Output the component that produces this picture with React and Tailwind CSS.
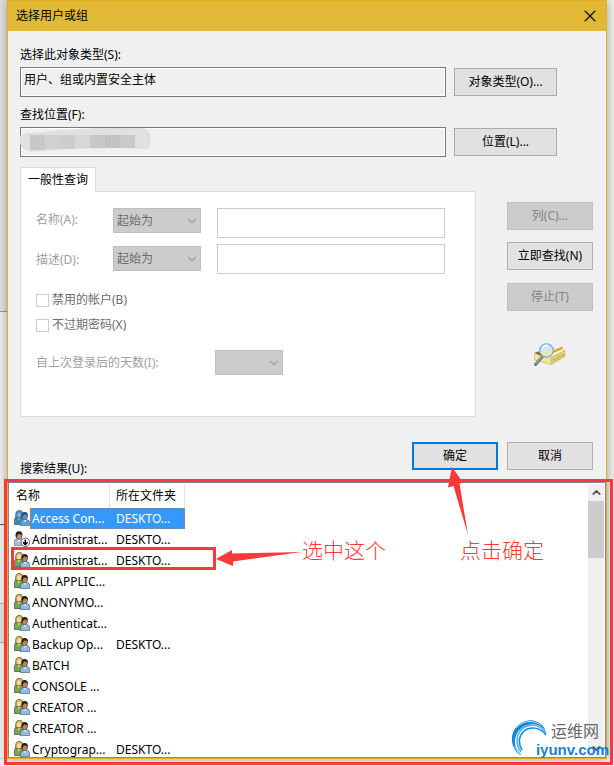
import { X, ChevronDown, ChevronUp } from "lucide-react";

const results = [
  { name: "Access Con...", folder: "DESKTO...", icon: "group", selected: true },
  { name: "Administrat...", folder: "DESKTO...", icon: "user" },
  { name: "Administrat...", folder: "DESKTO...", icon: "group" },
  { name: "ALL APPLIC...", folder: "", icon: "group" },
  { name: "ANONYMO...", folder: "", icon: "group" },
  { name: "Authenticat...", folder: "", icon: "group" },
  { name: "Backup Op...", folder: "DESKTO...", icon: "group" },
  { name: "BATCH", folder: "", icon: "group" },
  { name: "CONSOLE ...", folder: "", icon: "group" },
  { name: "CREATOR ...", folder: "", icon: "group" },
  { name: "CREATOR ...", folder: "", icon: "group" },
  { name: "Cryptograp...", folder: "DESKTO...", icon: "group" },
];

const GroupIcon = ({ selected }) => {
  const c = selected
    ? { hair: "#4d86b8", face: "#7fb2dc", body: "#3f8a9c", hair2: "#1d4f80", face2: "#5d94c4", body2: "#5fa4e0", line: "#24547f" }
    : { hair: "#d9b452", face: "#f4dcae", body: "#7aa84c", hair2: "#2b211b", face2: "#b98661", body2: "#8fbbe8", line: "#2c3226" };

  return (
    <svg width="16" height="16" viewBox="0 0 16 16" className="-mt-0.5 shrink-0" aria-hidden="true">
      <path d="M.4 14.500V9.500Q.4 7.200 3 6.700h4Q9 7 9 9v5.500z" fill={c.body} stroke={c.line} strokeWidth=".6" />
      <path d="M3.200 7l1.400 3.500L6.500 7z" fill={c.face} />
      <path d="M1.800 7.200Q.8.500 5 .4t4 4.300L8 7.500 2.500 7.800z" fill={c.hair} stroke={c.line} strokeWidth=".6" />
      <ellipse cx="5" cy="4.800" rx="1.900" ry="2.500" fill={c.face} />
      <path d="M6.300 15.700V12.500q0-2.500 3-3h3.400q3 .5 3 3v3.200z" fill={c.body2} stroke={c.line} strokeWidth=".5" />
      <path d="M9.500 9.500l1.500 3 1.500-3z" fill="#fff" opacity=".85" />
      <ellipse cx="10.700" cy="6.400" rx="2.800" ry="3.500" fill={c.face2} stroke={c.line} strokeWidth=".5" />
      <path d="M7.500 6.700Q7 1.900 10.700 1.900t3.300 4.800l-.9-2q-2 .4-3-.4L8.500 7.200z" fill={c.hair2} />
    </svg>
  );
};

const UserIcon = () => (
  <svg width="16" height="16" viewBox="0 0 16 16" className="-mt-0.5 shrink-0" aria-hidden="true">
    <path d="M.4 14.500V10.500q0-2.300 3-3h3.200q3 .7 3 3v4z" fill="#9dc2e6" stroke="#3a4a5c" strokeWidth=".5" />
    <path d="M3.300 8L5 11.500 6.800 8z" fill="#fff" />
    <ellipse cx="5" cy="4.800" rx="2.900" ry="3.800" fill="#c08f68" stroke="#2b211b" strokeWidth=".5" />
    <path d="M1.600 5.500Q1 .2 5 .2t3.400 5.300l-.9-2.200q-2 .4-3.300-.3L2.600 6.200z" fill="#2b211b" />
    <circle cx="11.300" cy="11.300" r="4.300" fill="#fff" stroke="#444" strokeWidth=".8" />
    <path d="M11.300 8.500v4.700M9 11.200l2.300 2.400 2.300-2.400" fill="none" stroke="#000" strokeWidth="1.500" />
  </svg>
);

const SearchBookIcon = () => (
  <svg width="32" height="24" viewBox="0 0 32 24" aria-hidden="true">
    <path d="M.5 10.500L14 4.500l16.500 3V13L17 21.500.5 17z" fill="#eee6a0" stroke="#c4b55c" strokeWidth=".6" />
    <path d="M.5 10.500L14 4.500l16.500 3-13.500 7z" fill="#f7f2c4" />
    <path d="M17 14.500L31 7.500v6l-14 8z" fill="#ddd27c" stroke="#b3a450" strokeWidth=".5" />
    <path d="M.5 10l3.500-1.500 4 2.500-1 2z" fill="#7d6a2a" />
    <path d="M18 8.500L28.500 3.500v2.200L18 10.500z" fill="#d99a1c" />
    <path d="M20 16v1.700M23 14.500v1.700M26 12.800v1.700M29 11v1.700" stroke="#8a7a34" strokeWidth="1" />
    <path d="M8.500 13.500L1.500 21.500" stroke="#6f7079" strokeWidth="3" strokeLinecap="round" />
    <path d="M8 13.500L1.500 21" stroke="#c4c5ce" strokeWidth="1" strokeLinecap="round" />
    <circle cx="12.500" cy="7.500" r="6.700" fill="#cfe6f6" fillOpacity=".95" stroke="#86a6cf" strokeWidth="1.300" />
    <path d="M7 9.500q6-3.500 11.500-1.500-1 5-6 5.300-4-.3-5.500-3.800z" fill="#e8e6b4" opacity=".85" />
    <path d="M8.500 5q1.500-3 5-2.700" fill="none" stroke="#fff" strokeWidth="1.500" />
  </svg>
);

const Button = ({ primary, disabled, className = "", children }) => {
  let look = "border border-[#adadad] bg-[#e1e1e1] text-black";
  if (primary) look = "border-2 border-[#0078d7] bg-[#e1e1e1] text-black";
  if (disabled) look = "border border-[#bfbfbf] bg-[#cccccc] text-[#838383]";

  return (
    <button type="button" disabled={disabled} className={`h-7 shrink-0 text-center ${look} ${className}`}>
      {children}
    </button>
  );
};

const Select = ({ id, label, value, className = "" }) => (
  <div className={`relative h-[25px] shrink-0 ${className}`}>
    <select
      id={id}
      aria-label={label}
      disabled
      className="h-full w-full appearance-none border border-[#bfbfbf] bg-[#cccccc] pl-[3px] text-[#6d6d6d] opacity-100"
    >
      <option>{value}</option>
    </select>
    <ChevronDown size={14} strokeWidth={2} className="pointer-events-none absolute top-1.5 right-0.5 text-[#a0a0a0]" />
  </div>
);

const PickerRow = ({ id, label, value, button, children }) => (
  <div>
    <label htmlFor={id} className="block">{label}</label>
    <div className="mt-1 flex items-center gap-2 pr-9">
      <div className="relative h-[30px] min-w-0 flex-1">
        <input
          id={id}
          readOnly
          defaultValue={value}
          className="h-full w-full border border-[#7a7a7a] bg-[#f0f0f0] px-[3px] pb-[7px] shadow-[inset_0_0_0_1px_#fff]"
        />
        {children}
      </div>
      <Button className="w-[103px]">{button}</Button>
    </div>
  </div>
);

// Pixelated smear hiding the computer name
const Mosaic = () => (
  <svg width="132" height="26" viewBox="0 0 132 26" className="absolute top-0 -left-px" aria-hidden="true">
    <path d="M1 9Q3 6 12 6L45 3 75 1h50l6 5q2 12-3 16L100 21l-50 1-38 3Q-2 22 1 9z" fill="#e0e0e0" />
    <path d="M11 8h15v15H11z" fill="#c9c8c7" />
    <path d="M26 8h15v14H26z" fill="#d0d0d0" />
    <path d="M41 8h15v14H41z" fill="#cdcdce" />
    <path d="M56 8h15v13H56z" fill="#d7d7d7" />
    <path d="M71 8h15v13H71z" fill="#c8c7c6" />
    <path d="M86 8h15v13H86z" fill="#c3c2be" />
    <path d="M101 8h15v13h-15z" fill="#c7c9cc" />
  </svg>
);

const QueryTab = () => (
  <div className="min-w-0 flex-1">
    <div role="tablist" className="relative z-10 -mb-px flex">
      <button
        type="button"
        role="tab"
        aria-selected="true"
        className="h-[25px] w-[76px] border border-b-0 border-[#dcdcdc] bg-white text-center"
      >
        一般性查询
      </button>
    </div>
    <div role="tabpanel" className="border border-[#dcdcdc] bg-white pt-4 pr-[30px] pb-[41px] pl-[15px] text-[#6d6d6d]">
      <div className="flex items-start">
        <label htmlFor="name" className="mt-1 w-[77px] shrink-0 text-[#a0a0a0]">名称(A):</label>
        <Select label="名称条件" value="起始为" className="w-[88px]" />
        <input id="name" disabled className="ml-4 h-[30px] min-w-0 flex-1 border border-[#cccccc] bg-white px-1" />
      </div>
      <div className="mt-1.5 flex items-start">
        <label htmlFor="desc" className="mt-2 w-[77px] shrink-0 text-[#a0a0a0]">描述(D):</label>
        <Select label="描述条件" value="起始为" className="mt-0.5 w-[88px]" />
        <input id="desc" disabled className="ml-4 h-[30px] min-w-0 flex-1 border border-[#cccccc] bg-white px-1" />
      </div>
      <label className="mt-[18px] flex items-center gap-[3px]">
        <input type="checkbox" disabled className="size-[13px] appearance-none border border-[#cccccc] bg-white" />
        禁用的帐户(B)
      </label>
      <label className="mt-[9px] flex items-center gap-[3px]">
        <input type="checkbox" disabled className="size-[13px] appearance-none border border-[#cccccc] bg-white" />
        不过期密码(X)
      </label>
      <div className="mt-[17px] flex items-end">
        <label htmlFor="days" className="mb-1 w-[179px] shrink-0 text-[#a0a0a0]">自上次登录后的天数(I):</label>
        <Select id="days" value="" className="w-[68px]" />
      </div>
    </div>
  </div>
);

const ResultTable = () => (
  <table aria-labelledby="results-label" className="w-44 table-fixed border-separate border-spacing-0 self-start">
    <thead>
      <tr className="h-6">
        <th className="w-[101px] border-r border-[#e5e5e5] p-0 pl-[7px] text-left font-normal">名称</th>
        <th className="border-r border-[#e5e5e5] p-0 pl-1.5 text-left font-normal">所在文件夹</th>
      </tr>
    </thead>
    <tbody>
      {results.map((row, i) => (
        <tr key={i} className={row.selected ? "h-[21px] text-white" : "h-[21px]"}>
          <td className="p-0 whitespace-nowrap">
            <div className="flex h-[21px] items-center pl-[5px]">
              {row.icon === "user" ? <UserIcon /> : <GroupIcon selected={row.selected} />}
              <span
                className={`flex h-full flex-1 items-center ${
                  row.selected ? "border border-r-0 border-dotted border-[#a08070] bg-[#3399ff] pl-px" : "pl-0.5"
                }`}
              >
                {row.name}
              </span>
            </div>
          </td>
          <td className="p-0 whitespace-nowrap">
            <div
              className={`flex h-[21px] items-center pl-1.5 ${
                row.selected ? "border border-l-0 border-dotted border-[#a08070] bg-[#3399ff]" : ""
              }`}
            >
              {row.folder}
            </div>
          </td>
        </tr>
      ))}
    </tbody>
  </table>
);

const Watermark = () => (
  <div className="absolute right-[-3px] bottom-0 h-10 w-[98px]">
    <svg width="38" height="40" viewBox="0 0 38 40" className="absolute top-0 left-0" aria-hidden="true">
      <path d="M35 13C31 3 20-1 10 5-2 12-2 29 9 37 1 27 3 15 12 9c8-5 17-3 23 4z" fill="#1687d9" />
      <path d="M35 15C29 6 18 5 11 11c-7 7-6 16-1 23" fill="none" stroke="#46acec" strokeWidth="1.500" />
      <path d="M35 17C29 9 19 8 13 13c-5 5-6 12-2 19" fill="none" stroke="#1687d9" strokeWidth="1.500" />
      <path d="M5 10C11 3 21 1 30 7" fill="none" stroke="#b9e2f8" strokeWidth="1" />
      <path d="M4 28c1 4 3 6 6 9" fill="none" stroke="#7cc6f2" strokeWidth="1.500" />
    </svg>
    <span className="absolute top-[3px] right-[10px] text-base leading-5 text-[#66686e]">运维网</span>
    <span className="absolute right-0 bottom-0 font-[family-name:Liberation_Sans,sans-serif] text-[15px] leading-4 font-bold text-[#1a80d2]">
      iyunv.com
    </span>
  </div>
);

const Annotations = () => (
  <div className="pointer-events-none absolute inset-0 text-[21px] leading-6 font-light text-[#fd3838]">
    <div className="absolute -top-[3px] -right-[7px] -bottom-[7px] -left-1 border-3 border-[#fd3838]" />
    <div className="absolute top-[65px] left-[3px] h-[23px] w-[205px] border-3 border-[#fd3838]" />
    <svg width="88" height="18" viewBox="0 0 88 18" className="absolute top-[67px] left-[208px]" aria-hidden="true">
      <path d="M0 10L16 1v3.500L86 3 17 12.500V17z" fill="#fd3838" />
    </svg>
    <span className="absolute top-14 left-[294px]">选中这个</span>
    <svg width="22" height="70" viewBox="0 0 22 70" className="absolute -top-[15px] right-[137px]" aria-hidden="true">
      <path d="M5 0l11 15.500-3.500 1L21 68 6.500 19 1 20.500z" fill="#fd3838" />
    </svg>
    <span className="absolute top-14 right-[62px]">点击确定</span>
  </div>
);

const Dialog = () => (
  <div className="min-w-0 flex-1 self-start border border-[#e2b11f] bg-[#f0f0f0] shadow-[0_0_10px_rgba(0,0,0,0.35)]">
    <header className="flex h-[30px] items-center justify-between bg-[#e1b936] pr-1.5 pl-2">
      <h1>选择用户或组</h1>
      <button type="button" aria-label="关闭">
        <X size={20} strokeWidth={1.3} />
      </button>
    </header>

    <div className="flex flex-col pt-4 pr-[13px] pl-3">
      <PickerRow id="type" label="选择此对象类型(S):" value="用户、组或内置安全主体" button="对象类型(O)..." />
      <div className="mt-2.5">
        <PickerRow id="location" label="查找位置(F):" value="" button="位置(L)...">
          <Mosaic />
        </PickerRow>
      </div>

      <div className="mt-2.5 flex gap-[31px]">
        <QueryTab />
        <div className="flex w-[86px] shrink-0 flex-col gap-3 pt-[35px]">
          <Button disabled>列(C)...</Button>
          <Button>立即查找(N)</Button>
          <Button disabled className="mt-px">停止(T)</Button>
          <div className="mt-5 flex justify-center">
            <SearchBookIcon />
          </div>
        </div>
      </div>

      <div className="mt-[25px] mb-[5px] flex items-end justify-between">
        <span id="results-label">搜索结果(U):</span>
        <div className="mb-[7px] flex gap-[9px]">
          <Button primary className="w-[86px]">确定</Button>
          <Button className="w-[86px]">取消</Button>
        </div>
      </div>
    </div>

    <div className="relative">
      <div className="flex h-[276px] justify-between overflow-hidden border border-[#828790] bg-white pt-px pr-px">
        <ResultTable />
        <div className="flex w-4 flex-col items-center bg-[#f0f0f0]">
          <ChevronUp size={13} strokeWidth={3} className="my-0.5 shrink-0 text-[#505050]" />
          <div className="h-[57px] w-full bg-[#cdcdcd]" />
          <ChevronDown size={13} strokeWidth={3} className="mt-auto mb-0.5 shrink-0 text-[#505050]" />
        </div>
      </div>
      <Watermark />
      <Annotations />
    </div>
  </div>
);

export default function App() {
  return (
    <div className="flex min-h-screen bg-[#f0f0f0] font-['Noto_Sans','Noto_Sans_CJK_SC',sans-serif] text-xs leading-4 text-black">
      <div className="flex w-[7px] shrink-0 flex-col">
        <div className="h-[312px] border-b border-[#999999] bg-[#e2e2e2]" />
        <div className="h-[213px] border-b border-[#555555]" />
        <div className="h-[79px] border-b border-[#aaaaaa]" />
        <div className="h-[39px] border-b border-[#aaaaaa] bg-[#e2e2e2]" />
        <div className="h-[116px] border-b border-[#cccccc]" />
      </div>
      <Dialog />
      <div className="w-[7px] shrink-0" />
    </div>
  );
}
